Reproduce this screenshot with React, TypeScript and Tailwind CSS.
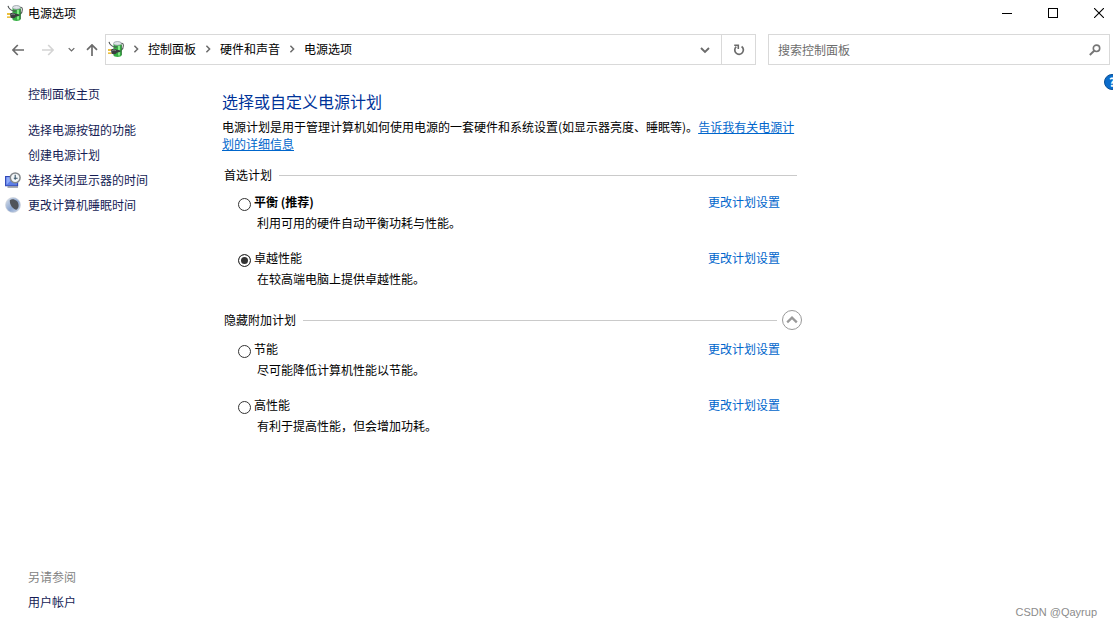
import type { ReactNode } from "react";

type Plan = {
  id: string;
  name: string;
  description: string;
  bold?: boolean;
};

const preferredPlans: Plan[] = [
  { id: "balanced", name: "平衡 (推荐)", description: "利用可用的硬件自动平衡功耗与性能。", bold: true },
  { id: "ultimate", name: "卓越性能", description: "在较高端电脑上提供卓越性能。" },
];

const additionalPlans: Plan[] = [
  { id: "saver", name: "节能", description: "尽可能降低计算机性能以节能。" },
  { id: "high", name: "高性能", description: "有利于提高性能，但会增加功耗。" },
];

const crumbs = ["控制面板", "硬件和声音", "电源选项"];

function PowerIcon() {
  return (
    <svg viewBox="0 0 16 16" className="size-4 shrink-0" aria-hidden="true">
      <path d="M12.500 3.200c1.200-1.400 2.900-.8 2.900 1.200 0 2-.9 3.900-2.300 4.900" fill="none" stroke="#5b605e" strokeWidth="1.100" />
      <path d="M5.500 3h8v11.200c0 2.300-8 2.300-8 0z" fill="#35b043" />
      <path d="M11 5v9.500" stroke="#8df08f" strokeWidth="1.800" />
      <path d="M13.400 4v10.200" stroke="#2b6b34" strokeWidth=".8" />
      <ellipse cx="9.500" cy="2.400" rx="3.900" ry="1.900" fill="#dfe4e8" stroke="#8a9299" strokeWidth=".7" />
      <path d="M1 .8c.5 2 1.400 3 2.300 3.600M3.200 4.400c2 1.700 4.300 1.900 6 1.400" fill="none" stroke="#4c5152" strokeWidth="1.100" />
      <path d="M0 9h3.200M0 12.200h3.600" stroke="#e5ac00" strokeWidth="1.300" />
      <path d="M3 8.600C4.300 7.500 6.800 7.500 8.200 8.600l4.300.8v1.300l-3.700 1c-1.200 1.700-3.900 2-5.300.8z" fill="#3a3d3f" />
      <path d="M4.300 9.700c1-.8 2.300-.9 3.500-.2" stroke="#9a9fa1" strokeWidth=".9" fill="none" />
    </svg>
  );
}

function DisplayClockIcon() {
  return (
    <svg viewBox="0 0 16 16" className="size-4" aria-hidden="true">
      <path d="M.6 4.500h12v9.300H.6z" fill="#5d7fe8" stroke="#2f45b5" strokeWidth="1.100" />
      <path d="M1.500 12.800 9 5.200H1.500z" fill="#8faafa" />
      <path d="M2.500 15h10.500" stroke="#7b8190" strokeWidth="1.300" />
      <circle cx="10.200" cy="5.800" r="4.900" fill="#f3f6f8" stroke="#85898d" strokeWidth="1.500" />
      <path d="M10.200 2.800v5M8.800 6.200h3.800" fill="none" stroke="#39556a" strokeWidth="1.100" />
    </svg>
  );
}

function MoonIcon() {
  return (
    <svg viewBox="0 0 16 16" className="size-4" aria-hidden="true">
      <defs>
        <linearGradient id="moon" x1="0" y1="0" x2="1" y2="1">
          <stop offset="0" stopColor="#dfe5ec" />
          <stop offset=".55" stopColor="#8ca6d0" />
          <stop offset="1" stopColor="#d5deea" />
        </linearGradient>
      </defs>
      <circle cx="8" cy="8" r="7.500" fill="url(#moon)" stroke="#ccd2da" strokeWidth=".6" />
      <path d="M4.800 3.200c3.200-2.200 8.500.2 8.800 4.800.2 2.600-.8 4.100-2.200 4.700C8.200 12.300 4.500 8 4.800 3.200z" fill="#50545a" />
    </svg>
  );
}

function Chevron({ className }: { className: string }) {
  return (
    <svg viewBox="0 0 8 8" className={className} aria-hidden="true">
      <path d="m.8 2.400 3.200 3.200 3.200-3.200" fill="none" stroke="currentColor" strokeWidth="1.500" />
    </svg>
  );
}

function Arrow({ className }: { className: string }) {
  return (
    <svg viewBox="0 0 12 12" className={className} aria-hidden="true">
      <path d="M12 6H1M5.800 1 .9 6l4.900 5" fill="none" stroke="currentColor" strokeWidth="1.700" />
    </svg>
  );
}

function TitleBar() {
  return (
    <header className="flex h-[26px] items-center pl-[7px] pr-[9px]">
      <PowerIcon />
      <h1 className="ml-[5px] flex-1">电源选项</h1>
      <div className="flex items-center gap-9">
        <button type="button" aria-label="最小化">
          <svg viewBox="0 0 10 10" className="size-2.5" shapeRendering="crispEdges">
            <path d="M0 5.500h10" stroke="#000" />
          </svg>
        </button>
        <button type="button" aria-label="最大化">
          <svg viewBox="0 0 10 10" className="size-2.5" shapeRendering="crispEdges">
            <path d="M.5.5h9v9h-9z" fill="none" stroke="#000" />
          </svg>
        </button>
        <button type="button" aria-label="关闭">
          <svg viewBox="0 0 10 10" className="size-2.5">
            <path d="m0 0 10 10M10 0 0 10" stroke="#000" strokeWidth="1.100" />
          </svg>
        </button>
      </div>
    </header>
  );
}

function NavigationBar() {
  return (
    <div className="mt-2 flex h-[31px] pr-[3px] text-[#6b6b6b]">
      <nav className="flex shrink-0 pl-[3px]" aria-label="导航">
        <button type="button" aria-label="后退" className="flex w-[30px] items-center justify-center">
          <Arrow className="size-3" />
        </button>
        <button type="button" aria-label="前进" className="flex w-[30px] items-center justify-center text-[#d4d4d4]">
          <Arrow className="size-3 rotate-180" />
        </button>
        <button type="button" aria-label="最近的位置" className="flex w-4 items-center justify-center">
          <Chevron className="size-[7px]" />
        </button>
        <button type="button" aria-label="向上" className="flex w-[26px] items-center justify-center">
          <Arrow className="size-3 rotate-90" />
        </button>
      </nav>

      <div className="flex min-w-0 flex-1 border border-[#d9d9d9]">
        <div className="flex min-w-0 flex-1 items-center pb-0.5 pl-0.5">
          <PowerIcon />
          {crumbs.map((crumb) => (
            <div key={crumb} className="flex items-center">
              <span className="flex w-6 justify-center">
                <Chevron className="size-2 -rotate-90" />
              </span>
              <a href="#" className="whitespace-nowrap text-black">{crumb}</a>
            </div>
          ))}
        </div>
        <button type="button" aria-label="以前的位置" className="flex w-8 items-center justify-center">
          <Chevron className="size-2.5" />
        </button>
        <button type="button" aria-label="刷新" className="flex w-[34px] items-center justify-center border-l border-[#d9d9d9]">
          <svg viewBox="0 0 12 12" className="size-3">
            <path d="M8.600 2.500A4.300 4.300 0 1 1 3.300 2.700" fill="none" stroke="currentColor" strokeWidth="1.700" />
            <path d="M1.200 1.300h4.100v3.800" fill="none" stroke="currentColor" strokeWidth="1.600" />
          </svg>
        </button>
      </div>

      <label className="ml-3 flex w-[342px] items-center border border-[#d9d9d9] pl-[9px] pr-2">
        <input
          type="text"
          aria-label="搜索控制面板"
          placeholder="搜索控制面板"
          className="min-w-0 flex-1 outline-none placeholder:text-[#6d6d6d]"
        />
        <svg viewBox="0 0 12 12" className="size-3" aria-hidden="true">
          <circle cx="7.500" cy="4.300" r="3.200" fill="none" stroke="#767676" strokeWidth="1.600" />
          <path d="M5.200 6.700.8 11" stroke="#767676" strokeWidth="1.900" />
        </svg>
      </label>
    </div>
  );
}

function SideLink({ icon, children }: { icon?: ReactNode; children: ReactNode }) {
  return (
    <li className="flex h-[25px] items-center">
      <span className="flex w-7 shrink-0 pl-[5px]">{icon}</span>
      <a href="#" className="text-[#151c55]">{children}</a>
    </li>
  );
}

function Sidebar() {
  return (
    <aside className="flex w-[222px] shrink-0 flex-col pt-4 pb-3.5">
      <ul>
        <SideLink>控制面板主页</SideLink>
      </ul>
      <ul className="mt-[11px]">
        <SideLink>选择电源按钮的功能</SideLink>
        <SideLink>创建电源计划</SideLink>
        <SideLink icon={<DisplayClockIcon />}>选择关闭显示器的时间</SideLink>
        <SideLink icon={<MoonIcon />}>更改计算机睡眠时间</SideLink>
      </ul>
      <h2 className="mt-auto flex h-[25px] items-center pl-7 text-[#838383]">另请参阅</h2>
      <ul>
        <SideLink>用户帐户</SideLink>
      </ul>
    </aside>
  );
}

function PlanList({ plans }: { plans: Plan[] }) {
  return (
    <ul className="flex flex-col gap-3.5 pt-1.5 pl-4 pr-[22px]">
      {plans.map((plan) => (
        <li key={plan.id} className="leading-[21px]">
          <div className="flex justify-between">
            <div className="flex items-center gap-[3px]">
              <input
                type="radio"
                name="plan"
                id={plan.id}
                defaultChecked={plan.id === "ultimate"}
                className="mt-1.5 size-[13px] appearance-none rounded-full border border-[#333] checked:bg-[#333] checked:shadow-[inset_0_0_0_2px_white]"
              />
              <label htmlFor={plan.id} className={plan.bold ? "font-bold" : ""}>{plan.name}</label>
            </div>
            <a href="#" className="text-[#0066cc]">更改计划设置</a>
          </div>
          <p className="pl-[19px]">{plan.description}</p>
        </li>
      ))}
    </ul>
  );
}

export default function App() {
  return (
    <div className="relative flex min-h-screen flex-col overflow-hidden bg-white font-['Noto_Sans_CJK_SC',sans-serif] text-xs text-black">
      <TitleBar />
      <NavigationBar />

      <div className="flex flex-1">
        <Sidebar />
        <main className="max-w-[580px] flex-1 pt-6">
          <h2 className="text-base leading-6 text-[#003399]">选择或自定义电源计划</h2>
          <p className="mt-[5px] pr-1 leading-[17px]">
            电源计划是用于管理计算机如何使用电源的一套硬件和系统设置(如显示器亮度、睡眠等)。
            <a href="#" className="text-[#0066cc] underline">告诉我有关电源计划的详细信息</a>
          </p>

          <section>
            <div className="mt-[13px] flex h-5 items-center gap-[7px] pl-0.5 pr-[5px]">
              <h3>首选计划</h3>
              <div className="h-px flex-1 bg-[#cacaca]" />
            </div>
            <PlanList plans={preferredPlans} />
          </section>

          <section>
            <div className="mt-[21px] mb-0.5 flex h-5 items-center pl-0.5">
              <h3>隐藏附加计划</h3>
              <div className="ml-[7px] mr-[5px] h-px flex-1 bg-[#cacaca]" />
              <button type="button" aria-label="隐藏附加计划" className="flex size-5 items-center justify-center rounded-full border border-[#999] text-[#999]">
                <Chevron className="size-3 rotate-180" />
              </button>
            </div>
            <PlanList plans={additionalPlans} />
          </section>
        </main>
      </div>

      <button
        type="button"
        aria-label="帮助"
        className="absolute top-[74px] -right-[7px] flex size-4 items-center justify-center rounded-full border border-[#0a4f94] bg-[#0b6ccb] font-bold text-white"
      >
        ?
      </button>
      <span className="absolute right-4 bottom-2 font-['Liberation_Sans',sans-serif] text-[11px] leading-4 text-[#8c8c8c]">CSDN @Qayrup</span>
    </div>
  );
}
